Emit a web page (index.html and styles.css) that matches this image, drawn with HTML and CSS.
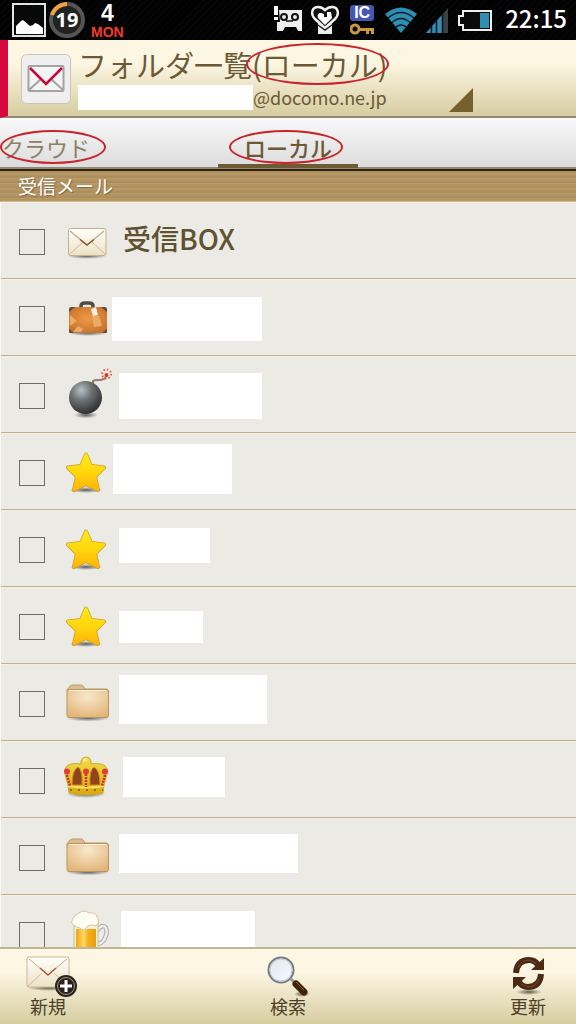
FILE: index.html
```html
<!DOCTYPE html>
<html lang="ja">
<head>
    <meta charset="UTF-8">
    <meta name="viewport" content="width=device-width, initial-scale=1.0">
    <title>フォルダ一覧</title>
    <link rel="stylesheet" href="styles.css">
</head>
<body>
    <!-- shared gradients and icons -->
    <svg class="defs" aria-hidden="true">
        <defs>
            <linearGradient id="paper" x1="0" y1="0" x2="0" y2="1"><stop offset="0" stop-color="#fffefa"/><stop offset="1" stop-color="#ece2c6"/></linearGradient>
            <linearGradient id="gold" x1="0" y1="0" x2="0" y2="1"><stop offset="0" stop-color="#ffe818"/><stop offset="0.5" stop-color="#ffd60c"/><stop offset="1" stop-color="#ffb40c"/></linearGradient>
            <radialGradient id="tan" cx="0.5" cy="0.25" r="0.8"><stop offset="0" stop-color="#f9e8cc"/><stop offset="1" stop-color="#e1b375"/></radialGradient>
            <radialGradient id="iron" cx="0.37" cy="0.28" r="0.7"><stop offset="0" stop-color="#b6c0c4"/><stop offset="0.45" stop-color="#6c7375"/><stop offset="1" stop-color="#343536"/></radialGradient>
            <radialGradient id="leather" cx="0.5" cy="0.45" r="0.65"><stop offset="0" stop-color="#ee9a48"/><stop offset="1" stop-color="#c4702a"/></radialGradient>
            <linearGradient id="beer" x1="0" y1="0" x2="1" y2="0"><stop offset="0" stop-color="#eea70f"/><stop offset="0.4" stop-color="#ffd966"/><stop offset="0.6" stop-color="#f3b01d"/><stop offset="1" stop-color="#e79d0c"/></linearGradient>
            <linearGradient id="crowngold" x1="0" y1="0" x2="0" y2="1"><stop offset="0" stop-color="#f2dd4c"/><stop offset="1" stop-color="#d9a80e"/></linearGradient>
            <linearGradient id="lens" x1="0" y1="0" x2="1" y2="1"><stop offset="0" stop-color="#dbe8f0"/><stop offset="1" stop-color="#f8fbfc"/></linearGradient>
            <radialGradient id="shade"><stop offset="0" stop-color="#000" stop-opacity="0.6"/><stop offset="1" stop-color="#000" stop-opacity="0"/></radialGradient>
        </defs>
        <symbol id="mail" viewBox="0 0 48 48">
            <ellipse cx="24" cy="38" rx="20" ry="3" fill="url(#shade)"/>
            <rect x="5.500" y="10.500" width="37.500" height="27" rx="2" fill="url(#paper)" stroke="#c5b08d"/>
            <path d="M6 37l14-13M43 37L29 24" fill="none" stroke="#d9b294"/>
            <path d="M7 13l17 14 17-14" fill="none" stroke="#c3a78a" stroke-width="1.200"/>
            <path d="M17 21.500l7 5.500 7-5.500" fill="none" stroke="#97532b" stroke-width="1.500"/>
        </symbol>
        <symbol id="star" viewBox="0 0 48 48">
            <ellipse cx="23" cy="41" rx="17" ry="3" fill="url(#shade)"/>
            <path d="M23 5.500l5 11.500 13 1.500-9 9 3 13.500L23 35 11 41l3-13.500-9-9L18 17z" fill="#c3a02c" stroke="#c3a02c" stroke-width="4" stroke-linejoin="round"/>
            <path d="M23 5.500l5 11.500 13 1.500-9 9 3 13.500L23 35 11 41l3-13.500-9-9L18 17z" fill="url(#gold)" stroke="url(#gold)" stroke-width="2.500" stroke-linejoin="round"/>
        </symbol>
        <symbol id="folder" viewBox="0 0 48 48">
            <ellipse cx="25" cy="38" rx="22" ry="3.500" fill="url(#shade)"/>
            <path d="M4 12c0-4 1-3 3-6 1-1 2-1 4-1h7c2 0 2 1 4 4h22l2 3z" fill="#dcbd90" stroke="#b99a6c"/>
            <rect x="4" y="9.500" width="41.500" height="28" rx="2" fill="url(#tan)" stroke="#b9935d"/>
            <path d="M6 10.500h37" stroke="#fff3df"/>
        </symbol>
    </svg>

    <div class="statusbar">
        <div class="status-left">
            <svg width="34" height="34" viewBox="0 0 34 34">
                <rect x="1" y="1" width="32" height="32" fill="#080808" stroke="#dfe5e5" stroke-width="2"/>
                <path d="M4 31v-8l5-5 2-1 7 6 3-1 2-2 3 1 5 4v6z" fill="#fff"/>
            </svg>
            <div class="dial">
                <svg width="38" height="38" viewBox="0 0 38 38">
                    <circle cx="19" cy="19" r="16" fill="#222" stroke="#555" stroke-width="4"/>
                    <path d="M4 14A16 16 0 0 1 19 3" fill="none" stroke="#f0a23c" stroke-width="4"/>
                </svg>
                <span>19</span>
            </div>
            <div class="date"><b>4</b><span>MON</span></div>
        </div>
        <div class="status-right">
            <svg width="28" height="34" viewBox="0 0 28 34">
                <path d="M0 3h4v9H0zM0 14h4v3H0z" fill="#fff"/>
                <path d="M5 7h23v21h-4l-2-4H11l-2 4H3v-9h3z" fill="#eee"/>
                <circle cx="10" cy="14" r="3" fill="#eee" stroke="#111" stroke-width="2"/>
                <circle cx="21" cy="14" r="3" fill="#eee" stroke="#111" stroke-width="2"/>
                <path d="M12 18h7" stroke="#111" stroke-width="1.500"/>
            </svg>
            <svg width="28" height="34" viewBox="0 0 28 34">
                <path d="M7 19h14v12H7z" fill="#eee"/>
                <path d="M14 25L4 16C-1 11 1 4 7 4c3 0 5 1 7 3 2-2 4-3 7-3 6 0 8 7 3 12z" fill="#111" stroke="#f1f1f1" stroke-width="2.500"/>
                <path d="M14 22l-7-7c-1-3 0-5 3-5l3 1v3h3V9h4l1 6z" fill="#fff"/>
                <path d="M7 22l7 5 7-5" fill="none" stroke="#222" stroke-width="1.500"/>
            </svg>
            <div class="ic">
                <b>IC</b>
                <svg width="24" height="12" viewBox="0 0 24 12">
                    <circle cx="5" cy="6" r="4" fill="none" stroke="#c9973c" stroke-width="3"/>
                    <path d="M9 5h15v6h-3V8h-2v3h-3V8H9z" fill="#c9973c"/>
                </svg>
            </div>
            <svg width="32" height="34" viewBox="0 0 32 34">
                <path d="M16 30L0 11q16-13 32 0z" fill="#2f8fb3"/>
                <path d="M3 15q13-11 26 0M7 19.500q9-8 18 0M11 24q5-4 10 0" fill="none" stroke="#071c25" stroke-width="1.500"/>
            </svg>
            <svg width="23" height="34" viewBox="0 0 23 34">
                <path d="M0 30L22 5v25z" fill="#3d4244"/>
                <path d="M0 30L16 12v18z" fill="#2f8fb3"/>
                <path d="M5.500 23v7M10.500 18v12M16.500 10v20" stroke="#061318" stroke-width="1.500"/>
            </svg>
            <svg width="34" height="34" viewBox="0 0 34 34">
                <path d="M5 8h28v19H5v-5H1v-9h4z" fill="#0a0a0a" stroke="#eee" stroke-width="2"/>
                <path d="M22 10h9v15h-9z" fill="#2f8fb3"/>
            </svg>
            <span class="clock">22:15</span>
        </div>
    </div>

    <header class="header">
        <svg class="logo" width="50" height="50" viewBox="0 0 50 50">
            <rect x="0.500" y="0.500" width="49" height="49" rx="5" fill="#efeff0" stroke="#c9c6b8"/>
            <rect x="7.500" y="12" width="35" height="25" rx="1" fill="#f4f4f4" stroke="#a3a3a3" stroke-width="2"/>
            <path d="M8 36l12-11M42 36L30 25" stroke="#a3a3a3" stroke-width="2"/>
            <path d="M9 14l16 16 16-16" fill="none" stroke="#c8063a" stroke-width="2.500"/>
        </svg>
        <div class="heading">
            <h1>フォルダ一覧<span class="circled circled-title">(ローカル)</span></h1>
            <div class="account"><span class="account-mask"></span>@docomo.ne.jp</div>
        </div>
        <button class="spinner" aria-label="アカウント切替">
            <svg width="24" height="24" viewBox="0 0 24 24"><path d="M24 0v24H0z" fill="#77602f"/></svg>
        </button>
    </header>

    <nav class="tabs">
        <a class="tab tab-prev" href="#"><span class="circled circled-cloud">クラウド</span></a>
        <a class="tab tab-active" href="#"><span class="circled circled-local">ローカル</span></a>
    </nav>

    <h2 class="section">受信メール</h2>

    <ul class="folders">
        <li>
            <input type="checkbox" id="f0">
            <svg class="icon"><use href="#mail"/></svg>
            <label class="name raised" for="f0">受信BOX</label>
        </li>
        <li>
            <input type="checkbox" id="f1" aria-label="フォルダ1">
            <svg class="icon" viewBox="0 0 48 48">
                <ellipse cx="25" cy="38" rx="20" ry="3" fill="url(#shade)"/>
                <path d="M18 13v-2q0-3 4-3h4q4 0 4 3v2" fill="none" stroke="#4b4b49" stroke-width="3.500"/>
                <rect x="6" y="12" width="38" height="26" rx="2" fill="url(#leather)"/>
                <path d="M6 17v-3l2-2h4zM44 17v-3l-2-2h-4zM6 34v3l1 1h4zM44 34v3l-1 1h-4z" fill="#574a40"/>
                <path d="M7 20l7 6-7 5zM10 37l5-6 5 3-2 3zM29 21h7l3 10-8 1z" fill="#e9ab66"/>
                <path d="M28 14l5-2 2 8-5 1z" fill="#f6eee0"/>
            </svg>
            <label class="mask mask-1" for="f1"></label>
        </li>
        <li>
            <input type="checkbox" id="f2" aria-label="フォルダ2">
            <svg class="icon" viewBox="0 0 48 48">
                <ellipse cx="23" cy="43" rx="12" ry="3.500" fill="url(#shade)"/>
                <path d="M30 12v-3q1-1 6-1 6 0 7-4" fill="none" stroke="#9b7b68" stroke-width="2"/>
                <circle cx="22.500" cy="25.500" r="16.500" fill="url(#iron)"/>
                <circle cx="43.500" cy="3" r="2" fill="#e2381e"/>
                <circle cx="43.500" cy="2" r="4.500" fill="none" stroke="#e65d44" stroke-width="2" stroke-dasharray="1.500 2"/>
            </svg>
            <label class="mask mask-2" for="f2"></label>
        </li>
        <li>
            <input type="checkbox" id="f3" aria-label="フォルダ3">
            <svg class="icon"><use href="#star"/></svg>
            <label class="mask mask-3 raised" for="f3"></label>
        </li>
        <li>
            <input type="checkbox" id="f4" aria-label="フォルダ4">
            <svg class="icon"><use href="#star"/></svg>
            <label class="mask mask-4 raised" for="f4"></label>
        </li>
        <li>
            <input type="checkbox" id="f5" aria-label="フォルダ5">
            <svg class="icon"><use href="#star"/></svg>
            <label class="mask mask-5" for="f5"></label>
        </li>
        <li>
            <input type="checkbox" id="f6" aria-label="フォルダ6">
            <svg class="icon"><use href="#folder"/></svg>
            <label class="mask mask-6 raised" for="f6"></label>
        </li>
        <li>
            <input type="checkbox" id="f7" aria-label="フォルダ7">
            <svg class="icon" viewBox="0 0 48 48">
                <ellipse cx="23" cy="37" rx="20" ry="4" fill="url(#shade)"/>
                <path d="M6 36L5 28 2 17V12q1-4 6-5 5-1 10 0V4q1-4 5-4t5 4v3q5-1 10 0 5 1 6 5v5l-3 11-1 8q-17 4-34 0z" fill="url(#crowngold)" stroke="#cda82c"/>
                <path d="M9 28q0-15 6-18 5 3 4 18zM37 28q0-15-6-18-5 3-4 18z" fill="#92431c" stroke="#c99416"/>
                <path d="M5 29q18 3 36 0" fill="none" stroke="#f6e05c" stroke-width="2"/>
                <path d="M23 17v13M4 18l3 11M42 18l-3 11" stroke="#cf3020" stroke-width="2.500" stroke-dasharray="2 1"/>
                <path d="M7 33h33" stroke="#8f6914" stroke-width="2" stroke-dasharray="2 6"/>
                <g fill="#e23d35"><circle cx="4" cy="14.500" r="3"/><circle cx="23" cy="14.500" r="3"/><circle cx="42" cy="14.500" r="3"/></g>
                <circle cx="22" cy="3" r="2" fill="#f8eb85"/>
            </svg>
            <label class="mask mask-7 raised" for="f7"></label>
        </li>
        <li>
            <input type="checkbox" id="f8" aria-label="フォルダ8">
            <svg class="icon"><use href="#folder"/></svg>
            <label class="mask mask-8 raised" for="f8"></label>
        </li>
        <li>
            <input type="checkbox" id="f9" aria-label="フォルダ9">
            <svg class="icon" viewBox="0 0 48 48">
                <path d="M34 20q5-8 9-3 2 5-2 12-3 4-7 4" fill="none" stroke="#aaa" stroke-width="4.500"/>
                <path d="M34 20q5-8 9-3 2 5-2 12-3 4-7 4" fill="none" stroke="#eee" stroke-width="2.500"/>
                <path d="M11 12h24v34H11z" fill="#f7efd7" stroke="#cdbb91"/>
                <path d="M13 18h20v28H13z" fill="url(#beer)"/>
                <path d="M10 14q-3-3 0-6 1-4 6-6 5-4 10 0 7-1 8 4 3 3 1 7-2 3-6 1-5 0-6 3-3 4-6 0-4-1-7-3z" fill="#fffdf3" stroke="#d3c49c"/>
            </svg>
            <label class="mask mask-9" for="f9"></label>
        </li>
    </ul>

    <footer class="toolbar">
        <button>
            <svg width="60" height="42" viewBox="0 0 60 42">
                <ellipse cx="31" cy="33" rx="22" ry="3" fill="url(#shade)"/>
                <rect x="9" y="2" width="42" height="30" rx="2" fill="url(#paper)" stroke="#c8b795"/>
                <path d="M10 31l14-13M50 31L36 18" stroke="#dcb497"/>
                <path d="M11 4l19 16L49 4" fill="none" stroke="#c6aa8a"/>
                <path d="M22 13l8 7 8-7" fill="none" stroke="#a75c31" stroke-width="1.500"/>
                <circle cx="48" cy="31" r="11" fill="#2b211b"/>
                <circle cx="48" cy="31" r="8.500" fill="none" stroke="#a39686"/>
                <path d="M48 25v12M42 31h12" stroke="#fff" stroke-width="3"/>
            </svg>
            <span>新規</span>
        </button>
        <button>
            <svg width="60" height="42" viewBox="0 0 60 42">
                <ellipse cx="44" cy="39" rx="8" ry="3" fill="url(#shade)"/>
                <path d="M33 24l6 6" stroke="#939ba0" stroke-width="3"/>
                <circle cx="23" cy="15" r="12.500" fill="url(#lens)" stroke="#747d81" stroke-width="2"/>
                <circle cx="23" cy="15" r="11" fill="none" stroke="#c3cdd1"/>
                <path d="M38 29l8 8" stroke="#412309" stroke-width="7" stroke-linecap="round"/>
                <path d="M38 27l8 8" stroke="#8b5a30"/>
            </svg>
            <span>検索</span>
        </button>
        <button>
            <svg width="60" height="42" viewBox="0 0 60 42">
                <ellipse cx="31" cy="37" rx="13" ry="3" fill="url(#shade)"/>
                <g fill="none" stroke="#4a2a14" stroke-width="6">
                    <path d="M18 18Q19 5 31 5q6 0 9 5"/>
                    <path d="M43 19q-1 13-13 13-6 0-9-5"/>
                </g>
                <path d="M46 3v12H33zM15 34V22h13z" fill="#4a2a14"/>
                <path d="M20 13q3-8 11-8l7 3M41 24q-3 8-11 8l-7-3" fill="none" stroke="#754a29"/>
            </svg>
            <span>更新</span>
        </button>
    </footer>
</body>
</html>
```

FILE: styles.css
```css
* { box-sizing: border-box; }
body { margin: 0; height: 100vh; display: flex; flex-direction: column; overflow: hidden; background: #ebeae5; color: #6b5a35; font-family: "Noto Sans CJK JP", sans-serif; }
button { border: none; padding: 0; background: none; font-family: inherit; color: inherit; cursor: pointer; }
svg { display: block; flex: none; }
.defs { position: absolute; width: 0; height: 0; }

.statusbar { flex: none; height: 40px; display: flex; justify-content: space-between; align-items: center; padding: 0 9px 0 12px; background: repeating-linear-gradient(135deg, #000 0 3px, #070707 3px 5px); color: #fff; }
.status-left { display: flex; align-items: center; gap: 2px; }
.status-right { display: flex; align-items: center; gap: 9px; }
.dial { position: relative; }
.dial span { position: absolute; inset: 0; text-align: center; font: bold 20px/38px "Noto Sans", sans-serif; }
.date { display: flex; flex-direction: column; align-items: center; margin-left: 3px; font-family: "Liberation Sans", sans-serif; font-weight: bold; }
.date b { font-size: 23px; line-height: 23px; }
.date span { font-size: 14px; line-height: 14px; color: #f43a2a; }
.ic { display: flex; flex-direction: column; align-items: center; gap: 2px; margin: 0 2px; }
.ic b { width: 24px; background: #4657b0; border-radius: 3px; text-align: center; font: bold 16px/16px "Liberation Sans", sans-serif; }
.clock { font-size: 24px; line-height: 36px; font-weight: 500; margin: 0 0 4px 4px; }

.header { flex: none; height: 78px; display: flex; padding: 0 103px 0 13px; border-left: 8px solid #d5073c; border-bottom: 2px solid #8f8975; background: linear-gradient(#fdf6e3 30%, #d6cda0); }
.logo { margin-top: 14px; }
.heading { flex: 1; margin-left: 7px; white-space: nowrap; }
h1 { margin: 4px 0 0; font-size: 29px; line-height: 40px; font-weight: 400; }
.account { display: flex; align-items: center; font-size: 18px; line-height: 26px; }
.account-mask { width: 175px; height: 25px; background: #fff; }
.spinner { align-self: flex-end; margin-bottom: 4px; }

/* red rings over the labels */
.circled { position: relative; }
.circled::after { content: ""; position: absolute; border: 2px solid #c8242c; border-radius: 50%; }
.circled-title::after { inset: 0 -1px 0 -6px; }
.circled-cloud::after { inset: 0 -16px 0 -2px; }
.circled-local::after { inset: 0 -11px 0 -15px; }

.tabs { flex: none; height: 51px; display: grid; grid-template-columns: 1fr 140px 1fr; background: linear-gradient(#f9f9f9, #dcdcdc); border-bottom: 2px solid #8f8975; }
.tab { padding-top: 12px; color: #6b5a35; font-size: 22px; line-height: 34px; font-weight: 500; text-decoration: none; }
.tab-prev { padding-left: 2px; color: #8d8066; font-weight: 400; }
.tab-active { text-align: center; border-bottom: 4px solid #6d5b35; }
.tab .circled { display: inline-block; }

.section { flex: none; margin: 0; height: 33px; padding-left: 18px; border-top: 2px solid #30200c; border-bottom: 1px solid #d6bb8b; background: repeating-linear-gradient(#ad8e5d 0 2px, #b89a69 2px 3px, #b39564 3px 5px); color: #fff; font-size: 19px; line-height: 30px; font-weight: 400; text-shadow: 1px 1px 1px #80683f; }

.folders { flex: 1; min-height: 0; overflow: hidden; margin: 0; padding: 0; list-style: none; border-left: 1px solid #f8f8f6; }
.folders li { height: 77px; display: flex; align-items: center; padding: 3px 0 0 18px; border-bottom: 1px solid #c1b08b; box-shadow: inset 0 1px #f5efe1; }
.folders input { appearance: none; flex: none; width: 26px; height: 26px; margin: 0; border: 1px solid #6c6c6a; }
.folders input:checked { background: #8b8b89; }
.icon { width: 48px; height: 48px; margin-left: 18px; overflow: visible; }
.name { margin-left: 12px; color: #5f5230; font-size: 28px; line-height: 36px; font-weight: 500; }
.mask { background: #fff; margin-left: 8px; }
.raised { margin-bottom: 8px; }
.mask-1 { width: 150px; height: 44px; margin-left: 1px; }
.mask-2 { width: 143px; height: 46px; }
.mask-3 { width: 119px; height: 50px; margin-left: 2px; }
.mask-4 { width: 91px; height: 35px; }
.mask-5 { width: 84px; height: 32px; }
.mask-6 { width: 148px; height: 49px; }
.mask-7 { width: 102px; height: 40px; margin-left: 12px; }
.mask-8 { width: 179px; height: 39px; }
.mask-9 { width: 134px; height: 48px; margin-left: 10px; }

.toolbar { flex: none; height: 77px; display: flex; justify-content: space-between; border-top: 2px solid #c1b795; background: linear-gradient(#fdf6e3 30%, #d6cda0); }
.toolbar button { width: 96px; display: flex; flex-direction: column; align-items: center; padding-top: 6px; color: #4b4028; font-size: 18px; line-height: 18px; }
```
